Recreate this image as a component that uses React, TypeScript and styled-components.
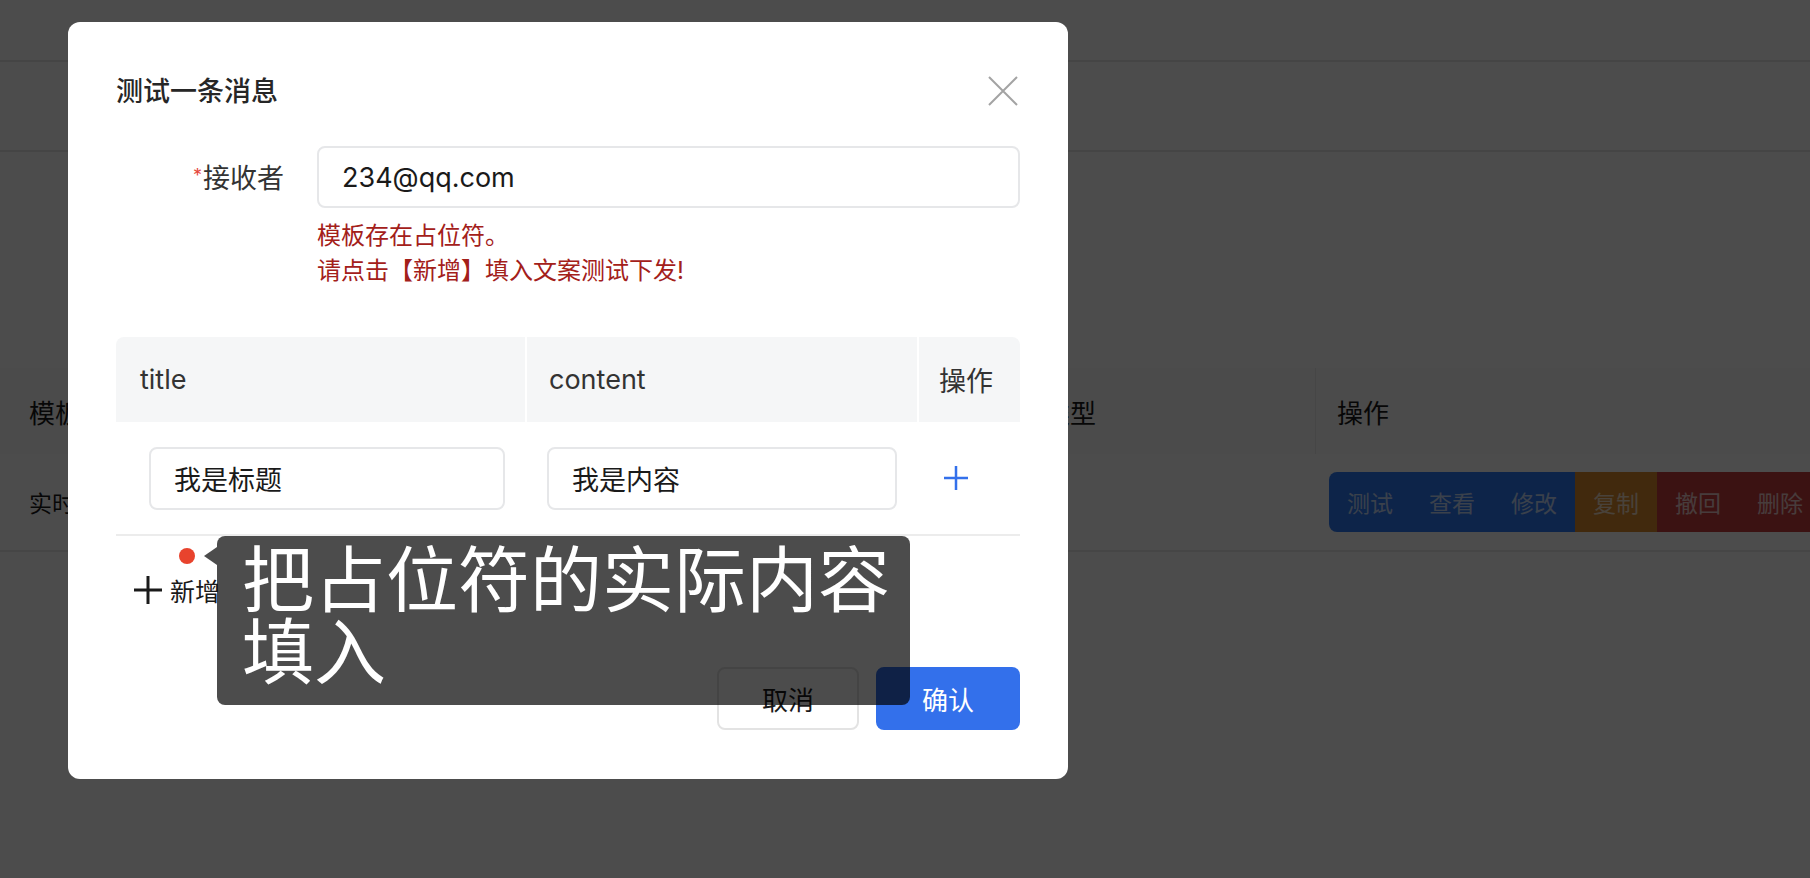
import React from 'react'
import styled, { createGlobalStyle } from 'styled-components'

const GlobalStyle = createGlobalStyle`
  html, body {
    margin: 0;
    padding: 0;
    background: #fff;
    overflow: hidden;
  }
  body {
    font-family: 'Inter', 'Noto Sans CJK SC', sans-serif;
    color: #1f1f1f;
  }
  * {
    box-sizing: border-box;
  }
`

/* ---------- page underneath the mask ---------- */

const Page = styled.div`
  width: 1810px;
  height: 878px;
  display: flex;
  flex-direction: column;
`

const TopBar = styled.div`
  height: 62px;
  border-bottom: 2px solid #e8e8e8;
`

const FilterBar = styled.div`
  height: 90px;
  border-bottom: 2px solid #e8e8e8;
`

const ListArea = styled.div`
  padding-top: 216px;
`

const ListRow = styled.div<{ $head?: boolean }>`
  display: grid;
  grid-template-columns: 323px 324px 324px 344px 1fr;
  height: ${p => (p.$head ? '86px' : '98px')};
  align-items: center;
  background: ${p => (p.$head ? '#fafafa' : '#fff')};
  border-bottom: ${p => (p.$head ? 'none' : '2px solid #ececec')};
  font-size: ${p => (p.$head ? '26px' : '23px')};
  color: #1a1a1a;
`

const ListCell = styled.div<{ $divider?: boolean }>`
  height: 100%;
  display: flex;
  align-items: center;
  padding: 0 21px;
  white-space: nowrap;
  overflow: hidden;
  border-left: ${p => (p.$divider ? '1px solid #ececec' : 'none')};

  &:first-child {
    padding-left: 29px;
  }
`

const ActionCell = styled(ListCell)`
  padding-left: 14px;
  overflow: visible;
`

const ActionGroup = styled.div`
  display: flex;
  height: 60px;
  border-radius: 8px 0 0 8px;
  overflow: hidden;
`

const ActionButton = styled.div<{ $tone: 'blue' | 'orange' | 'red' }>`
  display: flex;
  align-items: center;
  padding: 0 18px;
  font-size: 23px;
  color: rgba(255, 255, 255, 0.72);
  background: ${p =>
    p.$tone === 'blue' ? '#2d79f5' : p.$tone === 'orange' ? '#d98a2e' : '#c63f3f'};
`

/* ---------- mask + modal ---------- */

const Mask = styled.div`
  position: fixed;
  inset: 0;
  background: rgba(0, 0, 0, 0.7);
  display: flex;
  align-items: flex-start;
`

const Modal = styled.div`
  width: 1000px;
  margin: 22px 0 0 68px;
  padding: 52px 48px 49px;
  background: #fff;
  border-radius: 12px;
`

const ModalHeader = styled.div`
  height: 36px;
  display: flex;
  align-items: center;
  justify-content: space-between;
`

const ModalTitle = styled.div`
  font-size: 27px;
  line-height: 36px;
  font-weight: 500;
  color: #262626;
`

const CloseButton = styled.button`
  width: 32px;
  height: 32px;
  padding: 0;
  margin-top: -2px;
  margin-right: 1px;
  border: none;
  background: none;
  display: flex;
  align-items: center;
  justify-content: center;
`

const FormRow = styled.div`
  display: grid;
  grid-template-columns: 168px 1fr;
  column-gap: 33px;
  row-gap: 10px;
  margin-top: 36px;
  align-items: center;
`

const FieldLabel = styled.label`
  text-align: right;
  font-size: 27px;
  line-height: 36px;
  color: #333;
`

const Required = styled.span`
  color: #e5483d;
  font-size: 18px;
  vertical-align: 6px;
  margin-right: 1px;
`

const TextInput = styled.input<{ $height?: number }>`
  width: 100%;
  height: ${p => p.$height ?? 62}px;
  border: 2px solid #e6e7e9;
  border-radius: 8px;
  padding: 0 23px;
  font: inherit;
  font-size: 27px;
  color: #1a1a1a;
  background: #fff;
  outline: none;
`

const ErrorText = styled.div`
  grid-column: 2;
  font-size: 24px;
  line-height: 35px;
  color: #a3201a;
`

const EditTable = styled.div`
  margin-top: 49px;
`

const EditRow = styled.div<{ $head?: boolean }>`
  display: grid;
  grid-template-columns: 409px 390px 1fr;
  column-gap: 2px;
  height: ${p => (p.$head ? '85px' : '114px')};
  align-items: center;
  border-bottom: ${p => (p.$head ? 'none' : '2px solid #ececec')};
`

const HeadCell = styled.div`
  height: 100%;
  display: flex;
  align-items: center;
  padding-left: 22px;
  background: #f5f6f7;
  font-size: 27px;
  color: #333;

  &:first-child {
    padding-left: 24px;
    border-top-left-radius: 8px;
  }
  &:last-child {
    padding-left: 20px;
    border-top-right-radius: 8px;
  }
`

const BodyCell = styled.div`
  padding: 0 20px;

  &:first-child {
    padding-left: 33px;
  }
  &:last-child {
    padding-left: 25px;
    display: flex;
  }
`

const IconButton = styled.button`
  padding: 0;
  border: none;
  background: none;
  display: flex;
`

const AddBar = styled.div`
  position: relative;
  margin-top: 24px;
  height: 60px;
  display: flex;
  align-items: center;
  padding-left: 18px;
`

const AddButton = styled.button`
  display: flex;
  align-items: center;
  gap: 8px;
  padding: 0;
  border: none;
  background: none;
  font: inherit;
  font-size: 25px;
  color: #1a1a1a;
`

const Guide = styled.div`
  position: absolute;
  left: 63px;
  top: -24px;
  display: flex;
  align-items: flex-start;
  z-index: 2;
`

const GuideDot = styled.div`
  width: 16px;
  height: 16px;
  margin-top: 12px;
  border-radius: 50%;
  background: #e8432d;
`

const GuideArrow = styled.div`
  width: 0;
  height: 0;
  margin: 11px 0 0 9px;
  border-top: 9px solid transparent;
  border-bottom: 9px solid transparent;
  border-right: 13px solid rgba(0, 0, 0, 0.7);
`

const GuideBubble = styled.div`
  width: 693px;
  height: 169px;
  padding: 8px 20px 0 25px;
  border-radius: 8px;
  background: rgba(0, 0, 0, 0.7);
  color: #fff;
  font-size: 72px;
  line-height: 72px;
  white-space: nowrap;
`

const Footer = styled.div`
  margin-top: 47px;
  display: flex;
  justify-content: flex-end;
  gap: 17px;
`

const FooterButton = styled.button<{ $primary?: boolean }>`
  height: 63px;
  width: ${p => (p.$primary ? '144px' : '142px')};
  border-radius: 8px;
  border: ${p => (p.$primary ? 'none' : '2px solid #e3e3e3')};
  background: ${p => (p.$primary ? '#3370eb' : '#fff')};
  color: ${p => (p.$primary ? '#fff' : '#1a1a1a')};
  font: inherit;
  font-size: 26px;
`

const CloseIcon = () => (
  <svg width="30" height="30" viewBox="0 0 30 30">
    <path d="M1 1 L29 29 M29 1 L1 29" stroke="#a3a3a3" strokeWidth="2" fill="none" />
  </svg>
)

const PlusIcon = ({ size, color, width }: { size: number; color: string; width: number }) => (
  <svg width={size} height={size} viewBox={`0 0 ${size} ${size}`}>
    <path
      d={`M${size / 2} 0 V${size} M0 ${size / 2} H${size}`}
      stroke={color}
      strokeWidth={width}
      fill="none"
    />
  </svg>
)

const actions: { label: string; tone: 'blue' | 'orange' | 'red' }[] = [
  { label: '测试', tone: 'blue' },
  { label: '查看', tone: 'blue' },
  { label: '修改', tone: 'blue' },
  { label: '复制', tone: 'orange' },
  { label: '撤回', tone: 'red' },
  { label: '删除', tone: 'red' },
]

export default function App() {
  return (
    <>
      <GlobalStyle />
      <Page>
        <TopBar />
        <FilterBar />
        <ListArea>
          <ListRow $head>
            <ListCell>模板名称</ListCell>
            <ListCell>模板ID</ListCell>
            <ListCell>渠道</ListCell>
            <ListCell>发送类型</ListCell>
            <ListCell $divider>操作</ListCell>
          </ListRow>
          <ListRow>
            <ListCell>实时消息模板</ListCell>
            <ListCell>1</ListCell>
            <ListCell>邮件</ListCell>
            <ListCell>实时</ListCell>
            <ActionCell>
              <ActionGroup>
                {actions.map(a => (
                  <ActionButton key={a.label} $tone={a.tone}>
                    {a.label}
                  </ActionButton>
                ))}
              </ActionGroup>
            </ActionCell>
          </ListRow>
        </ListArea>
      </Page>

      <Mask>
        <Modal>
          <ModalHeader>
            <ModalTitle>测试一条消息</ModalTitle>
            <CloseButton>
              <CloseIcon />
            </CloseButton>
          </ModalHeader>

          <FormRow>
            <FieldLabel>
              <Required>*</Required>接收者
            </FieldLabel>
            <TextInput defaultValue="234@qq.com" />
            <ErrorText>
              模板存在占位符。
              <br />
              请点击【新增】填入文案测试下发!
            </ErrorText>
          </FormRow>

          <EditTable>
            <EditRow $head>
              <HeadCell>title</HeadCell>
              <HeadCell>content</HeadCell>
              <HeadCell>操作</HeadCell>
            </EditRow>
            <EditRow>
              <BodyCell>
                <TextInput $height={63} defaultValue="我是标题" />
              </BodyCell>
              <BodyCell>
                <TextInput $height={63} defaultValue="我是内容" />
              </BodyCell>
              <BodyCell>
                <IconButton>
                  <PlusIcon size={24} color="#3370eb" width={2.5} />
                </IconButton>
              </BodyCell>
            </EditRow>
          </EditTable>

          <AddBar>
            <AddButton>
              <PlusIcon size={28} color="#1a1a1a" width={3} />
              新增
            </AddButton>
            <Guide>
              <GuideDot />
              <GuideArrow />
              <GuideBubble>
                把占位符的实际内容
                <br />
                填入
              </GuideBubble>
            </Guide>
          </AddBar>

          <Footer>
            <FooterButton>取消</FooterButton>
            <FooterButton $primary>确认</FooterButton>
          </Footer>
        </Modal>
      </Mask>
    </>
  )
}
